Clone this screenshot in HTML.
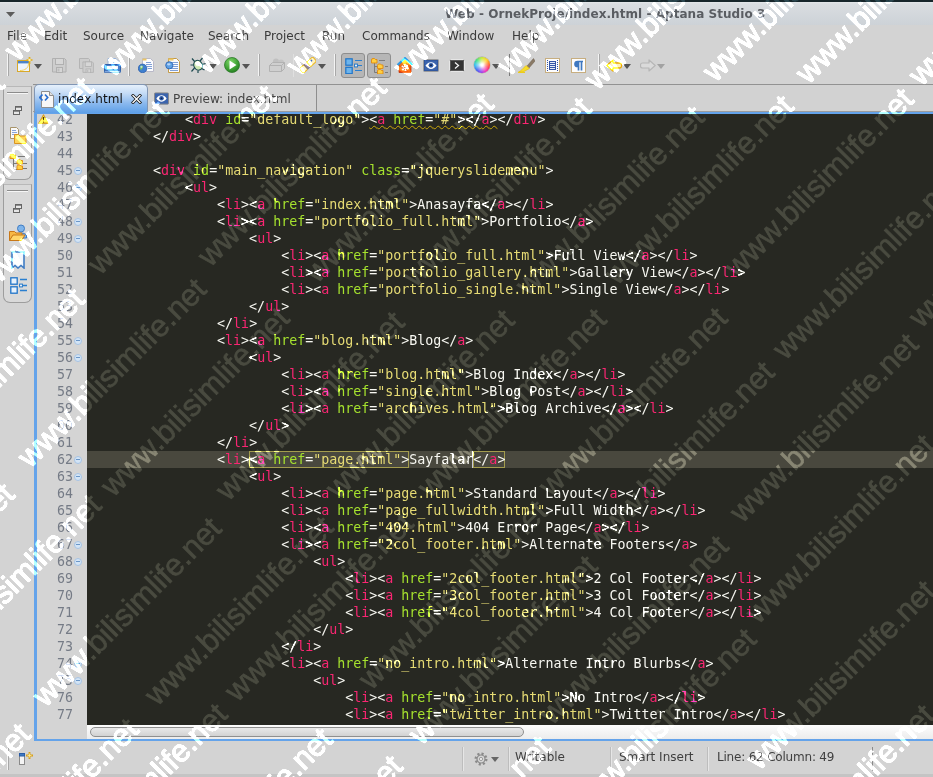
<!DOCTYPE html>
<html><head><meta charset="utf-8"><title>Web - OrnekProje/index.html - Aptana Studio 3</title>
<style>
html,body{margin:0;padding:0}
body{width:933px;height:777px;overflow:hidden;position:relative;background:#d3d3d3;font-family:"DejaVu Sans","Liberation Sans",sans-serif;font-size:12px;color:#3a3a3a}
.abs{position:absolute}
#topline{left:0;top:0;width:933px;height:2px;background:#17262b}
#title{left:0;top:2px;width:933px;height:23px;background:linear-gradient(#e4e7ea 0,#d9dde1 8%,#cdd2d7 100%)}
#title span{position:absolute;left:445px;top:5px;font-weight:bold;font-size:12px;line-height:15px;color:#5a5d62;white-space:nowrap;letter-spacing:.05px}
#menu{left:0;top:25px;width:933px;height:24px;background:#d3d3d3}
#menu span{position:absolute;top:4px;font-size:12px;line-height:15px;color:#3b3b3b;white-space:nowrap}
#tline{left:33px;top:84px;width:900px;height:1px;background:#929292}
#tabbg{left:33px;top:85px;width:900px;height:26px;background:#d2d2d2}
#tline2{left:33px;top:111px;width:900px;height:1px;background:#9c9c9c}
#tab2{left:148px;top:85px;width:168px;height:26px;background:#d4d4d4;border-right:1px solid #8e8e8e}
#tab2 span{position:absolute;left:25px;top:7px;font-size:12px;line-height:15px;color:#444;white-space:nowrap}
#tab1{left:34px;top:84px;width:114px;height:29px;border:1px solid #8196b4;border-bottom:0;border-radius:5px 5px 0 0;box-sizing:border-box;background:linear-gradient(#e6f0fb 0,#c4dbf6 30%,#8bb9ee 65%,#5d9fe8 100%)}
#tab1 span{position:absolute;left:23px;top:7px;font-size:12px;line-height:15px;color:#111;white-space:nowrap;letter-spacing:.1px}
.side{left:3px;width:27px;border:1px solid #9d9d9d;border-top-color:#b8b8b8;border-radius:0 0 7px 7px;background:#d9d9d9}
.side hr{position:absolute;left:3px;top:5px;width:21px;height:1px;margin:0;border:0;background:#8c8c8c;box-shadow:0 1px 0 #f6f6f6}
#edframe{left:34px;top:112px;width:899px;height:629px;background:#64a3ea}
#gutter{left:37px;top:114px;width:50px;height:625px;background:#d4d4d4;overflow:hidden}
#gutter>div{margin-top:-3px}
#gutter div div{height:17px;line-height:17px;font-family:"DejaVu Sans Mono","Liberation Mono",monospace;font-size:13.3px;color:#757b86;padding-left:20px;position:relative;white-space:pre}
#gutter u{position:absolute;left:37px;top:5px;width:8px;height:8px;border-radius:50%;background:#d3e4f5;border:1px solid #a6c3e4;box-sizing:border-box}
#gutter u:after{content:"";position:absolute;left:1px;top:2px;width:4px;height:1px;background:#6a96c8}
#code{left:87px;top:114px;width:846px;height:611px;background:#272822;overflow:hidden}
#code>div{margin-top:-3px}
#code div div{height:17px;line-height:17px;font-family:"DejaVu Sans Mono","Liberation Mono",monospace;font-size:13.3px;color:#f8f8f2;padding-left:2px;white-space:pre}
#code div div.cur{background:#49483e}
#code b{font-weight:normal;color:#f92672}
#code i{font-style:normal;color:#a6e22e}
#code s{text-decoration:none;color:#e6db74}
#code em{font-style:normal;display:inline-block;height:17px;box-shadow:inset 0 0 0 1px #a39c4e}#code em.c{border-left:1px solid #c8c8d8;margin-left:-1px}#code em.w{display:inline;height:auto;box-shadow:none;text-decoration:underline wavy #c9a60a .8px;text-underline-offset:1px}
#hscroll{left:87px;top:725px;width:846px;height:14px;background:linear-gradient(#fdfdfd,#ececec)}
#hthumb{left:90px;top:727px;width:432px;height:8px;border:1px solid #8f8f8f;border-radius:6px;background:linear-gradient(#e9e9e9,#d2d2d2)}
#status{left:0;top:741px;width:933px;height:36px;background:#d3d3d3}
#status span{position:absolute;top:9px;font-size:12px;line-height:15px;color:#3f3f3f;white-space:nowrap}
#status i{position:absolute;top:6px;width:1px;height:24px;background:#bdbdbd;border-right:1px solid #e6e6e6}
#botline{left:0;top:774px;width:933px;height:3px;background:#c4c4c4}
</style></head><body>
<div class="abs" id="title"><svg class="abs" style="left:6px;top:10px" width="9" height="5" viewBox="0 0 9 5"><path d="M0 0h9L4.500 5z" fill="#5c5c5c"/></svg><span>Web - OrnekProje/index.html - Aptana Studio 3</span></div>
<div class="abs" id="topline"></div>
<div class="abs" id="menu">
<span style="left:7px">File</span><span style="left:44px">Edit</span><span style="left:83px">Source</span><span style="left:140px">Navigate</span><span style="left:208px">Search</span><span style="left:264px">Project</span><span style="left:322px">Run</span><span style="left:362px">Commands</span><span style="left:447px">Window</span><span style="left:512px">Help</span>
</div>
<div class="abs" style="left:7px;top:54px;width:1px;height:22px;background:#f4f4f4;border-right:1px solid #a8a8a8"></div>
<div class="abs" style="left:128px;top:54px;width:1px;height:22px;background:#f4f4f4;border-right:1px solid #a8a8a8"></div>
<div class="abs" style="left:258px;top:54px;width:1px;height:22px;background:#f4f4f4;border-right:1px solid #a8a8a8"></div>
<div class="abs" style="left:334px;top:54px;width:1px;height:22px;background:#f4f4f4;border-right:1px solid #a8a8a8"></div>
<div class="abs" style="left:598px;top:54px;width:1px;height:22px;background:#f4f4f4;border-right:1px solid #a8a8a8"></div>
<div class="abs" style="left:509px;top:54px;width:1px;height:22px;background:#7a7a7a"></div>
<div class="abs" style="left:293px;top:54px;width:1px;height:23px;background:#e0e0e0"></div>
<svg class="abs" style="left:17px;top:57px" width="16" height="16" viewBox="0 0 16 16"><rect x=".5" y="3.5" width="12" height="11" fill="#eef5fd" stroke="#d9a92a"/><rect x="1" y="4" width="11" height="2.4" fill="#4d84c8"/><path d="M3 13.5c5 0 8.5-2.5 8.5-7" stroke="#f2d060" fill="none"/><path d="M12.5 0v7M9.5 3h6" stroke="#e2ad16" stroke-width="1.7"/><circle cx="12.5" cy="3" r="1.2" fill="#fff3b0"/></svg>
<svg class="abs" style="left:34px;top:64px" width="8" height="5" viewBox="0 0 8 5"><path d="M0 0h8l-4 5z" fill="#555"/></svg>
<svg class="abs" style="left:52px;top:58px" width="15" height="15" viewBox="0 0 15 15"><path d="M.5 .5h12l1.5 1.5v12H.5z" fill="#cdcdcd" stroke="#b0b0b0"/><rect x="3.5" y=".5" width="8" height="6" fill="#d6d6d6" stroke="#b0b0b0"/><rect x="4.5" y="9.500" width="6" height="5" fill="#d6d6d6" stroke="#b0b0b0"/><rect x="5.5" y="10.5" width="2" height="3" fill="#bdbdbd"/></svg>
<svg class="abs" style="left:79px;top:58px" width="15" height="15" viewBox="0 0 15 15"><path d="M.5 .5h9l1 1v9H.5z" fill="#cdcdcd" stroke="#b4b4b4"/><g transform="translate(3.5,3.5) scale(.78)"><path d="M.5 .5h12l1.5 1.5v12H.5z" fill="#cdcdcd" stroke="#b0b0b0"/><rect x="3.5" y=".5" width="8" height="6" fill="#d6d6d6" stroke="#b0b0b0"/><rect x="4.5" y="9.500" width="6" height="5" fill="#d6d6d6" stroke="#b0b0b0"/><rect x="5.5" y="10.5" width="2" height="3" fill="#bdbdbd"/></g></svg>
<svg class="abs" style="left:104px;top:58px" width="17" height="15" viewBox="0 0 17 15"><path d="M4 .5h8l2 2v4H4z" fill="#fff" stroke="#9db4d6"/><path d="M6 2.500h5M6 4.500h6" stroke="#9bb3d8"/><path d="M1.500 6.500h14a1 1 0 011 1v6h-16v-6a1 1 0 011-1z" fill="#4a80cc" stroke="#2e5fa8"/><rect x="3" y="8" width="11" height="3" fill="#eef4fb"/><rect x=".5" y="12.500" width="16" height="2" fill="#7ea6de" stroke="#2e5fa8" stroke-width=".6"/></svg>
<svg class="abs" style="left:138px;top:58px" width="16" height="15" viewBox="0 0 16 15"><path d="M4.500 .5h8l3 3v10h-11z" fill="#fbfbfd" stroke="#b9b9c8"/><path d="M4.500 .5h4v2h-4z" fill="#ecc766"/><path d="M8 4.500h5M8 6.500h6M9 8.500h5M10 10.500h4" stroke="#7f9fd6"/><circle cx="4.600" cy="10.400" r="4.300" fill="#3f7fd0" stroke="#2a5ca6" stroke-width=".7"/><path d="M2.500 8c1.500-1 3 0 2.500 1.500s-2 1-1.500 3c-1.500-1-2-3-1-4.500z" fill="#7fc45a"/><circle cx="3.400" cy="8.800" r="1.100" fill="#cfe6ff" opacity=".8"/></svg>
<svg class="abs" style="left:165px;top:58px" width="16" height="15" viewBox="0 0 16 15"><path d="M3.500 .5h8l3 3v11h-11z" fill="#fbfbfd" stroke="#c39b48"/><path d="M3.500 .5h5v2h-5z" fill="#ecc766"/><path d="M7 4.500h6M8 6.500h5M8 8.500h5M5 10.500h8M5 12.500h8" stroke="#7f9fd6"/><circle cx="4.300" cy="7.300" r="3.600" fill="#5fa0e4" stroke="#2f68b4" stroke-width=".9"/><ellipse cx="3.800" cy="6.300" rx="1.800" ry="1.100" fill="#cfe6ff" opacity=".8"/></svg>
<svg class="abs" style="left:190px;top:57px" width="16" height="16" viewBox="0 0 16 16"><g stroke="#1e4a50" stroke-width="1.200" fill="none"><path d="M5 5L2 1.500M10 4L12.500 1M4 8H.5M12 7.500l3.500-1M4.500 11L1.500 14.500M11.500 11.500l3 1.500M8 13.500v2.500"/></g><ellipse cx="8" cy="8.300" rx="4.200" ry="5" transform="rotate(-25 8 8.300)" fill="#cfe9b4" stroke="#1e4a50" stroke-width="1.100"/><ellipse cx="7" cy="7" rx="1.800" ry="2.400" transform="rotate(-25 7 7)" fill="#f3fbe6"/></svg>
<svg class="abs" style="left:209px;top:64px" width="8" height="5" viewBox="0 0 8 5"><path d="M0 0h8l-4 5z" fill="#555"/></svg>
<svg class="abs" style="left:224px;top:57px" width="16" height="16" viewBox="0 0 16 16"><defs><radialGradient id="rg" cx=".4" cy=".3" r=".8"><stop offset="0" stop-color="#7fd66a"/><stop offset=".6" stop-color="#3da032"/><stop offset="1" stop-color="#1f7420"/></radialGradient></defs><circle cx="8" cy="8" r="7.500" fill="url(#rg)" stroke="#2c7a28" stroke-width=".8"/><path d="M5.500 3.500L12.500 8l-7 4.500z" fill="#fff"/></svg>
<svg class="abs" style="left:242px;top:64px" width="8" height="5" viewBox="0 0 8 5"><path d="M0 0h8l-4 5z" fill="#555"/></svg>
<svg class="abs" style="left:269px;top:58px" width="17" height="14" viewBox="0 0 17 14"><circle cx="7" cy="3.500" r="3" fill="#c0c0c0"/><circle cx="12" cy="4.500" r="3" fill="#c4c4c4"/><path d="M.5 7.500l3-3h12v6l-3 3H.5z" fill="#cfcfcf" stroke="#b2b2b2"/><path d="M.5 7.500h12l3-3M12.500 7.500v6" stroke="#b2b2b2" fill="none"/></svg>
<svg class="abs" style="left:300px;top:57px" width="16" height="16" viewBox="0 0 16 16"><g transform="rotate(-42 8 8)"><rect x="-1" y="5" width="6" height="6" rx="1" fill="#fff7cf" stroke="#e9b41e"/><rect x="5" y="5" width="4" height="6" fill="#8d8494" stroke="#6e6678" stroke-width=".6"/><path d="M9 5h6.500a1.500 1.500 0 011.500 1.500v3a1.500 1.500 0 01-1.500 1.500H9z" fill="#fff3c2" stroke="#e9b41e"/><circle cx="13.500" cy="7" r=".9" fill="#3a6ad0"/></g></svg>
<svg class="abs" style="left:318px;top:64px" width="8" height="5" viewBox="0 0 8 5"><path d="M0 0h8l-4 5z" fill="#555"/></svg>
<div class="abs" style="left:341px;top:53px;width:22px;height:23px;background:#b6b6b6;border:1px solid #8e8e8e;border-radius:3px"></div>
<div class="abs" style="left:367px;top:53px;width:22px;height:23px;background:#b6b6b6;border:1px solid #8e8e8e;border-radius:3px"></div>
<svg class="abs" style="left:345px;top:58px" width="17" height="16" viewBox="0 0 17 16"><rect x=".8" y=".8" width="6.400" height="6.400" fill="#6db4ec" stroke="#1f74c8" stroke-width="1.200"/><rect x=".8" y="9.300" width="6.400" height="6.400" fill="#6db4ec" stroke="#1f74c8" stroke-width="1.200"/><path d="M10 2.500h7M13 7.500h4M10 12.500h7" stroke="#2a7fd0" stroke-width="1.200"/><rect x="9.600" y="6.100" width="2.800" height="2.800" fill="#fff" stroke="#1f74c8"/></svg>
<svg class="abs" style="left:371px;top:58px" width="17" height="16" viewBox="0 0 17 16"><path d="M3.500 5v9.500h4M3.500 8.500h4" stroke="#7c7c7c" fill="none"/><path d="M8 2.500h6M14 8.500h3M14 14.500h3" stroke="#7c7c7c"/><g transform="translate(.5,.5)"><path d="M0 1.500a1.500 1.500 0 011.500-1.500h1.500l1 1h1.500v3.500h-5.500z" fill="#ffcf3f" stroke="#e08a10" stroke-width=".9"/></g><g transform="translate(6.500,6)"><path d="M0 1.500a1.500 1.500 0 011.500-1.500h1.500l1 1h1.500v3.500h-5.500z" fill="#ffcf3f" stroke="#e08a10" stroke-width=".9"/></g><g transform="translate(6.500,11.500)"><path d="M0 1.500a1.500 1.500 0 011.500-1.500h1.500l1 1h1.500v3.500h-5.500z" fill="#ffcf3f" stroke="#e08a10" stroke-width=".9"/></g></svg>
<svg class="abs" style="left:397px;top:57px" width="16" height="16" viewBox="0 0 16 16"><defs><linearGradient id="hg" x1="0" y1="0" x2="0" y2="1"><stop offset="0" stop-color="#f6a22a"/><stop offset="1" stop-color="#dc3208"/></linearGradient></defs><path d="M2 7.500L8 2l6 5.500V15.500H2z" fill="url(#hg)" stroke="#c03a0a" stroke-width=".8"/><path d="M.5 8L8 1l7.500 7" stroke="#2f9ae6" stroke-width="2" fill="none" stroke-linejoin="round"/><circle cx="8" cy="10.500" r="2.600" fill="none" stroke="#fff" stroke-width="2" stroke-dasharray="1.500 1.200"/><circle cx="8" cy="10.500" r="1.700" fill="#fff"/><circle cx="8" cy="10.500" r=".8" fill="#e8541a"/></svg>
<svg class="abs" style="left:423px;top:59px" width="16" height="13" viewBox="0 0 16 13"><rect x=".5" y=".5" width="15" height="12" rx="1" fill="#3b64ad" stroke="#9a9a9a"/><rect x="1.500" y="1.500" width="13" height="10" fill="none" stroke="#2b4f94" stroke-width=".6"/><path d="M2.500 6.500c3-4.500 8-4.500 11 0c-3 4.500-8 4.500-11 0z" fill="#fff"/><circle cx="8" cy="6.300" r="2.400" fill="#2f5ba8"/><circle cx="8" cy="6.300" r="1" fill="#0e2450"/></svg>
<svg class="abs" style="left:449px;top:59px" width="16" height="13" viewBox="0 0 16 13"><rect x=".5" y=".5" width="15" height="12" rx="1" fill="#3a3a3a" stroke="#e6e6e6"/><rect x="1.500" y="1.500" width="13" height="10" fill="#333" stroke="#595959"/><path d="M6 3.500L9.500 6.500L6 9.500" stroke="#f2f2f2" stroke-width="1.300" fill="none"/></svg>
<div class="abs" style="left:474px;top:57px;width:16px;height:16px;border-radius:50%;background:radial-gradient(circle,#fff 0,#fff 10%,rgba(255,255,255,.5) 34%,rgba(255,255,255,0) 66%),conic-gradient(#c8e830,#ffd020 12%,#ff7020 22%,#ff3050 30%,#f030c0 42%,#9040f0 52%,#4060f0 62%,#30c0f0 75%,#40e080 87%,#c8e830);box-shadow:0 0 0 .5px rgba(120,120,120,.5)"></div>
<svg class="abs" style="left:492px;top:64px" width="8" height="5" viewBox="0 0 8 5"><path d="M0 0h8l-4 5z" fill="#555"/></svg>
<svg class="abs" style="left:518px;top:58px" width="17" height="15" viewBox="0 0 17 15"><path d="M9 8L15.500 .5L17 3L11 10z" fill="#8a7a66" stroke="#6a5c4c" stroke-width=".5"/><path d="M8 7.500l3.500 3L5 14H.5c2.500-1 4-3 7.500-6.500z" fill="#f6dc2a" stroke="#e2b80c" stroke-width=".6"/><path d="M0 14.500h7" stroke="#eccc1a"/></svg>
<svg class="abs" style="left:545px;top:58px" width="15" height="15" viewBox="0 0 15 15"><rect x=".5" y=".5" width="14" height="14" fill="#fdfdfd" stroke="#c7ae80"/><rect x="4.500" y="3.500" width="6" height="8" fill="#e4ecf8" stroke="#3555a6"/><path d="M5 5.500h5M5 7.500h5M5 9.500h5" stroke="#3555a6"/><path d="M2.500 2v11M12.500 2v11" stroke="#3555a6" stroke-dasharray="1 1"/></svg>
<svg class="abs" style="left:571px;top:58px" width="15" height="15" viewBox="0 0 15 15"><rect x=".5" y=".5" width="14" height="14" fill="#fdfdfd" stroke="#c7ae80"/><path d="M7.500 12.500V3.500M10.500 12.500V3.500M12 3.500H6.500a2.500 2.500 0 000 5h1" stroke="#3f78c0" stroke-width="1.700" fill="none"/><path d="M4 6a2.500 2.500 0 012.500-2.500h1v5h-1A2.500 2.500 0 014 6z" fill="#3f78c0"/></svg>
<svg class="abs" style="left:606px;top:59px" width="16" height="13" viewBox="0 0 16 13"><path d="M.8 6.500L7 1v3h6.500a2 2 0 012 2v1a2 2 0 01-2 2H7v3z" fill="#fff2b8" stroke="#eaa708" stroke-width="1.300" stroke-linejoin="round"/></svg>
<svg class="abs" style="left:623px;top:64px" width="8" height="5" viewBox="0 0 8 5"><path d="M0 0h8l-4 5z" fill="#555"/></svg>
<svg class="abs" style="left:640px;top:59px" width="16" height="13" viewBox="0 0 16 13"><path d="M15.200 6.500L9 1v3H2.500a2 2 0 00-2 2v1a2 2 0 002 2H9v3z" fill="#dadada" stroke="#b6b6b6" stroke-width="1.200" stroke-linejoin="round"/></svg>
<svg class="abs" style="left:657px;top:64px" width="8" height="5" viewBox="0 0 8 5"><path d="M0 0h8l-4 5z" fill="#a2a2a2"/></svg>
<div class="abs" id="tline"></div>
<div class="abs" id="tabbg"></div>
<div class="abs" id="tline2"></div>
<div class="abs" id="tab2"><svg class="abs" style="left:6px;top:7px" width="15" height="13" viewBox="0 0 16 13"><rect x=".5" y=".5" width="15" height="12" rx="1" fill="#3b64ad" stroke="#8a8a8a"/><path d="M2.500 6.500c3-4.500 8-4.500 11 0c-3 4.500-8 4.500-11 0z" fill="#fff"/><circle cx="8" cy="6.300" r="2.400" fill="#2f5ba8"/><circle cx="8" cy="6.300" r="1" fill="#0e2450"/></svg><span>Preview: index.html</span></div>
<div class="abs" id="edframe"></div>
<div class="abs" id="tab1"><svg class="abs" style="left:4px;top:6px" width="15" height="17" viewBox="0 0 15 17"><path d="M2.500 .5h8l4 4v12h-12z" fill="#f7f7f7" stroke="#8e8e8e"/><path d="M10.500 .5v4h4" fill="#e0e0e0" stroke="#8e8e8e"/><path d="M3.500 3.500L.8 6.500l2.700 3M6 3.500l2.700 3L6 9.500" stroke="#2a6fd0" stroke-width="1.700" fill="none"/></svg><span>index.html</span><svg class="abs" style="left:96px;top:9px" width="11" height="10" viewBox="0 0 11 10"><path d="M2 1.500l7 7M9 1.500l-7 7" stroke="#1a1a1a" stroke-width="3" stroke-linecap="square"/><path d="M2 1.500l7 7M9 1.500l-7 7" stroke="#fff" stroke-width="1.300" stroke-linecap="square"/></svg></div>
<div class="abs side" style="top:86px;height:92px"><hr>
<svg class="abs" style="left:9px;top:19px" width="9" height="9" viewBox="0 0 9 9"><rect x="2.500" y=".5" width="6" height="4" fill="#e6e6e6" stroke="#666"/><rect x="2.500" y=".5" width="6" height="1.200" fill="#666"/><rect x=".5" y="4.500" width="6" height="4" fill="#e6e6e6" stroke="#666"/><rect x=".5" y="4.500" width="6" height="1.200" fill="#666"/></svg>
<svg class="abs" style="left:5px;top:40px" width="18" height="17" viewBox="0 0 18 17"><path d="M1.500 .5h6l2 2v9h-8z" fill="#fafafa" stroke="#a8946a"/><path d="M3 3.500h4M3 5.500h5M3 7.500h3" stroke="#88a4d8"/><path d="M5.500 7.500h4l1.500 1.500h6v7.500h-11.500z" fill="#ffd45a" stroke="#d89420"/></svg>
<svg class="abs" style="left:5px;top:66px" width="18" height="18" viewBox="0 0 18 18"><path d="M4.500 5v11.500h5M4.500 10.500h5" stroke="#777" fill="none"/><path d="M9 3.500h7M14 10.500h4M14 15.500h4" stroke="#777"/><g fill="#ffcf3f" stroke="#e08a10" stroke-width=".9"><path d="M1 2.500a1.500 1.500 0 011.500-1.500h1.500l1 1h1.500v3.500h-5.500z"/><path d="M8 8a1.500 1.500 0 011.500-1.500h1.500l1 1h1.500V11h-5.500z"/><path d="M8 13.500a1.500 1.500 0 011.500-1.500h1.500l1 1h1.500v3.500h-5.500z"/></g></svg>
</div>
<div class="abs side" style="top:184px;height:117px"><hr>
<svg class="abs" style="left:9px;top:19px" width="9" height="9" viewBox="0 0 9 9"><rect x="2.500" y=".5" width="6" height="4" fill="#e6e6e6" stroke="#666"/><rect x="2.500" y=".5" width="6" height="1.200" fill="#666"/><rect x=".5" y="4.500" width="6" height="4" fill="#e6e6e6" stroke="#666"/><rect x=".5" y="4.500" width="6" height="1.200" fill="#666"/></svg>
<svg class="abs" style="left:5px;top:39px" width="18" height="18" viewBox="0 0 18 18"><circle cx="12" cy="4.500" r="3.500" fill="#7fb4ea" stroke="#3f7cc4"/><path d="M6.500 12c0-4 11-4 11 0v2h-11z" fill="#7fb4ea" stroke="#3f7cc4"/><path d="M.5 7.500h5l1.500 1.500h6v2.500h-9l-3.500 5z" fill="#f7b844" stroke="#c87818"/><path d="M.5 16.500l3.500-5.500h12l-3.500 5.500z" fill="#ffd66a" stroke="#c87818"/></svg>
<svg class="abs" style="left:7px;top:66px" width="14" height="18" viewBox="0 0 14 18"><path d="M1 1h12v16l-3-2.500-3 2.500-3-2.500-3 2.500z" fill="#f2f7fd" stroke="#3f7cc4" stroke-width="1.600"/></svg>
<svg class="abs" style="left:6px;top:92px" width="17" height="17" viewBox="0 0 17 17"><rect x=".8" y=".8" width="6.400" height="6.400" fill="#e6f1fc" stroke="#1f74c8" stroke-width="1.300"/><rect x=".8" y="9.800" width="6.400" height="6.400" fill="#e6f1fc" stroke="#1f74c8" stroke-width="1.300"/><path d="M10 2.500h7M13 8.500h4M10 13.500h7" stroke="#2a7fd0" stroke-width="1.300"/><rect x="9.600" y="7.100" width="2.800" height="2.800" fill="#fff" stroke="#1f74c8"/></svg>
</div>
<div class="abs" id="gutter"><div>
<div>42</div>
<div>43</div>
<div>44</div>
<div>45<u></u></div>
<div>46<u></u></div>
<div>47</div>
<div>48<u></u></div>
<div>49<u></u></div>
<div>50</div>
<div>51</div>
<div>52</div>
<div>53</div>
<div>54</div>
<div>55<u></u></div>
<div>56<u></u></div>
<div>57</div>
<div>58</div>
<div>59</div>
<div>60</div>
<div>61</div>
<div>62<u></u></div>
<div>63<u></u></div>
<div>64</div>
<div>65</div>
<div>66</div>
<div>67<u></u></div>
<div>68<u></u></div>
<div>69</div>
<div>70</div>
<div>71</div>
<div>72</div>
<div>73</div>
<div>74<u></u></div>
<div>75<u></u></div>
<div>76</div>
<div>77</div>
</div><svg class="abs" style="left:1px;top:0px" width="11" height="10" viewBox="0 0 14 13"><path d="M7 .8L13.300 12.200H.7z" fill="#f8d03a" stroke="#c98a10" stroke-linejoin="round"/><path d="M7 4v4.500" stroke="#3a2a08" stroke-width="1.600"/><circle cx="7" cy="10.300" r=".9" fill="#3a2a08"/></svg></div>
<div class="abs" id="code"><div>
<div>            &lt;<b>div</b> <i>id</i>=<s>"default_logo"</s>&gt;<em class="w">&lt;<b>a</b> <i>href</i>=<s>"#"</s>&gt;&lt;/<b>a</b>&gt;</em>&lt;/<b>div</b>&gt;</div>
<div>        &lt;/<b>div</b>&gt;</div>
<div></div>
<div>        &lt;<b>div</b> <i>id</i>=<s>"main_navigation"</s> <i>class</i>=<s>"jqueryslidemenu"</s>&gt;</div>
<div>            &lt;<b>ul</b>&gt;</div>
<div>                &lt;<b>li</b>&gt;&lt;<b>a</b> <i>href</i>=<s>"index.html"</s>&gt;Anasayfa&lt;/<b>a</b>&gt;&lt;/<b>li</b>&gt;</div>
<div>                &lt;<b>li</b>&gt;&lt;<b>a</b> <i>href</i>=<s>"portfolio_full.html"</s>&gt;Portfolio&lt;/<b>a</b>&gt;</div>
<div>                    &lt;<b>ul</b>&gt;</div>
<div>                        &lt;<b>li</b>&gt;&lt;<b>a</b> <i>href</i>=<s>"portfolio_full.html"</s>&gt;Full View&lt;/<b>a</b>&gt;&lt;/<b>li</b>&gt;</div>
<div>                        &lt;<b>li</b>&gt;&lt;<b>a</b> <i>href</i>=<s>"portfolio_gallery.html"</s>&gt;Gallery View&lt;/<b>a</b>&gt;&lt;/<b>li</b>&gt;</div>
<div>                        &lt;<b>li</b>&gt;&lt;<b>a</b> <i>href</i>=<s>"portfolio_single.html"</s>&gt;Single View&lt;/<b>a</b>&gt;&lt;/<b>li</b>&gt;</div>
<div>                    &lt;/<b>ul</b>&gt;</div>
<div>                &lt;/<b>li</b>&gt;</div>
<div>                &lt;<b>li</b>&gt;&lt;<b>a</b> <i>href</i>=<s>"blog.html"</s>&gt;Blog&lt;/<b>a</b>&gt;</div>
<div>                    &lt;<b>ul</b>&gt;</div>
<div>                        &lt;<b>li</b>&gt;&lt;<b>a</b> <i>href</i>=<s>"blog.html"</s>&gt;Blog Index&lt;/<b>a</b>&gt;&lt;/<b>li</b>&gt;</div>
<div>                        &lt;<b>li</b>&gt;&lt;<b>a</b> <i>href</i>=<s>"single.html"</s>&gt;Blog Post&lt;/<b>a</b>&gt;&lt;/<b>li</b>&gt;</div>
<div>                        &lt;<b>li</b>&gt;&lt;<b>a</b> <i>href</i>=<s>"archives.html"</s>&gt;Blog Archive&lt;/<b>a</b>&gt;&lt;/<b>li</b>&gt;</div>
<div>                    &lt;/<b>ul</b>&gt;</div>
<div>                &lt;/<b>li</b>&gt;</div>
<div class="cur">                &lt;<b>li</b>&gt;<em>&lt;<b>a</b> <i>href</i>=<s>"page.html"</s>&gt;</em>Sayfalar<em class="c">&lt;/<b>a</b>&gt;</em></div>
<div>                    &lt;<b>ul</b>&gt;</div>
<div>                        &lt;<b>li</b>&gt;&lt;<b>a</b> <i>href</i>=<s>"page.html"</s>&gt;Standard Layout&lt;/<b>a</b>&gt;&lt;/<b>li</b>&gt;</div>
<div>                        &lt;<b>li</b>&gt;&lt;<b>a</b> <i>href</i>=<s>"page_fullwidth.html"</s>&gt;Full Width&lt;/<b>a</b>&gt;&lt;/<b>li</b>&gt;</div>
<div>                        &lt;<b>li</b>&gt;&lt;<b>a</b> <i>href</i>=<s>"404.html"</s>&gt;404 Error Page&lt;/<b>a</b>&gt;&lt;/<b>li</b>&gt;</div>
<div>                        &lt;<b>li</b>&gt;&lt;<b>a</b> <i>href</i>=<s>"2col_footer.html"</s>&gt;Alternate Footers&lt;/<b>a</b>&gt;</div>
<div>                            &lt;<b>ul</b>&gt;</div>
<div>                                &lt;<b>li</b>&gt;&lt;<b>a</b> <i>href</i>=<s>"2col_footer.html"</s>&gt;2 Col Footer&lt;/<b>a</b>&gt;&lt;/<b>li</b>&gt;</div>
<div>                                &lt;<b>li</b>&gt;&lt;<b>a</b> <i>href</i>=<s>"3col_footer.html"</s>&gt;3 Col Footer&lt;/<b>a</b>&gt;&lt;/<b>li</b>&gt;</div>
<div>                                &lt;<b>li</b>&gt;&lt;<b>a</b> <i>href</i>=<s>"4col_footer.html"</s>&gt;4 Col Footer&lt;/<b>a</b>&gt;&lt;/<b>li</b>&gt;</div>
<div>                            &lt;/<b>ul</b>&gt;</div>
<div>                        &lt;/<b>li</b>&gt;</div>
<div>                        &lt;<b>li</b>&gt;&lt;<b>a</b> <i>href</i>=<s>"no_intro.html"</s>&gt;Alternate Intro Blurbs&lt;/<b>a</b>&gt;</div>
<div>                            &lt;<b>ul</b>&gt;</div>
<div>                                &lt;<b>li</b>&gt;&lt;<b>a</b> <i>href</i>=<s>"no_intro.html"</s>&gt;No Intro&lt;/<b>a</b>&gt;&lt;/<b>li</b>&gt;</div>
<div>                                &lt;<b>li</b>&gt;&lt;<b>a</b> <i>href</i>=<s>"twitter_intro.html"</s>&gt;Twitter Intro&lt;/<b>a</b>&gt;&lt;/<b>li</b>&gt;</div>
</div></div>
<div class="abs" id="hscroll"></div>
<div class="abs" id="hthumb"></div>
<div class="abs" id="status">
<div class="abs" style="left:7px;top:7px;width:1px;height:22px;background:#f4f4f4;border-right:1px solid #a8a8a8"></div>
<svg class="abs" style="left:19px;top:10px" width="15" height="15" viewBox="0 0 15 15"><rect x=".5" y="2.500" width="5" height="11" fill="#f4f4f4" stroke="#8a8a8a"/><rect x=".5" y="2.500" width="5" height="2.500" fill="#3f7cc4" stroke="#2a5ca6"/><path d="M10.500 1v7M7 4.500h7" stroke="#d8a018" stroke-width="1.800"/><path d="M10.500 2.500v4M8.500 4.500h4" stroke="#fff0a0" stroke-width=".8"/></svg>
<i style="left:462px"></i><i style="left:508px"></i><i style="left:610px"></i><i style="left:707px"></i><i style="left:872px;background:#8a8a8a;border:0"></i>
<svg class="abs" style="left:473px;top:10px" width="16" height="16" viewBox="0 0 16 16"><circle cx="8" cy="8" r="5" fill="none" stroke="#8a8a8a" stroke-width="3" stroke-dasharray="2 1.900"/><circle cx="8" cy="8" r="4" fill="#d6d6d6" stroke="#8a8a8a" stroke-width="1.200"/><circle cx="8" cy="8" r="1.600" fill="#efefef" stroke="#8a8a8a" stroke-width=".8"/></svg>
<svg class="abs" style="left:491px;top:16px" width="8" height="5" viewBox="0 0 8 5"><path d="M0 0h8l-4 5z" fill="#666"/></svg>
<span style="left:515px">Writable</span><span style="left:619px">Smart Insert</span><span style="left:717px;letter-spacing:-.2px">Line: 62 Column: 49</span>
</div>
<div class="abs" id="botline"></div>
<svg id="wm" width="933" height="777" viewBox="0 0 933 777" style="position:absolute;left:0;top:0;mix-blend-mode:color-dodge;pointer-events:none"><g font-family="Liberation Sans, Arial, sans-serif" font-size="31" fill="#767676" stroke="#767676" stroke-width="0.8">
<rect x="-300" y="-300" width="1600" height="1400" fill="#000" stroke="none"/>
<text transform="translate(66.5,10) rotate(-45)" x="-71.5" y="2">www.bilisimlife.net</text>
<text transform="translate(162.5,26) rotate(-45)" x="-71.5" y="2">www.bilisimlife.net</text>
<text transform="translate(256.5,23) rotate(-45)" x="-71.5" y="2">www.bilisimlife.net</text>
<text transform="translate(348.5,25) rotate(-45)" x="-71.5" y="2">www.bilisimlife.net</text>
<text transform="translate(455.5,27) rotate(-45)" x="-71.5" y="2">www.bilisimlife.net</text>
<text transform="translate(558.5,25) rotate(-45)" x="-71.5" y="2">www.bilisimlife.net</text>
<text transform="translate(646.5,39) rotate(-45)" x="-71.5" y="2">www.bilisimlife.net</text>
<text transform="translate(764.5,31) rotate(-45)" x="-71.5" y="2">www.bilisimlife.net</text>
<text transform="translate(857.5,33) rotate(-45)" x="-71.5" y="2">www.bilisimlife.net</text>
<text transform="translate(970.5,35) rotate(-45)" x="-71.5" y="2">www.bilisimlife.net</text>
<text transform="translate(-122.5,212) rotate(-45)" x="-71.5" y="2">www.bilisimlife.net</text>
<text transform="translate(-33.5,216) rotate(-45)" x="-71.5" y="2">www.bilisimlife.net</text>
<text transform="translate(41.5,239) rotate(-45)" x="-71.5" y="2">www.bilisimlife.net</text>
<text transform="translate(149.5,224) rotate(-45)" x="-71.5" y="2">www.bilisimlife.net</text>
<text transform="translate(259.5,216) rotate(-45)" x="-71.5" y="2">www.bilisimlife.net</text>
<text transform="translate(366.5,232) rotate(-45)" x="-71.5" y="2">www.bilisimlife.net</text>
<text transform="translate(464.5,236) rotate(-45)" x="-71.5" y="2">www.bilisimlife.net</text>
<text transform="translate(577.5,245) rotate(-45)" x="-71.5" y="2">www.bilisimlife.net</text>
<text transform="translate(666.5,234) rotate(-45)" x="-71.5" y="2">www.bilisimlife.net</text>
<text transform="translate(786.5,227) rotate(-45)" x="-71.5" y="2">www.bilisimlife.net</text>
<text transform="translate(834.5,309) rotate(-45)" x="-71.5" y="2">www.bilisimlife.net</text>
<text transform="translate(970.5,277) rotate(-45)" x="-71.5" y="2">www.bilisimlife.net</text>
<text transform="translate(-42.5,427) rotate(-45)" x="-71.5" y="2">www.bilisimlife.net</text>
<text transform="translate(79.5,417) rotate(-45)" x="-71.5" y="2">www.bilisimlife.net</text>
<text transform="translate(162.5,446) rotate(-45)" x="-71.5" y="2">www.bilisimlife.net</text>
<text transform="translate(277.5,450) rotate(-45)" x="-71.5" y="2">www.bilisimlife.net</text>
<text transform="translate(387.5,448) rotate(-45)" x="-71.5" y="2">www.bilisimlife.net</text>
<text transform="translate(479.5,447) rotate(-45)" x="-71.5" y="2">www.bilisimlife.net</text>
<text transform="translate(600.5,446) rotate(-45)" x="-71.5" y="2">www.bilisimlife.net</text>
<text transform="translate(647.5,500) rotate(-45)" x="-71.5" y="2">www.bilisimlife.net</text>
<text transform="translate(791.5,472) rotate(-45)" x="-71.5" y="2">www.bilisimlife.net</text>
<text transform="translate(-112.5,622) rotate(-45)" x="-71.5" y="2">www.bilisimlife.net</text>
<text transform="translate(-25.5,633) rotate(-45)" x="-71.5" y="2">www.bilisimlife.net</text>
<text transform="translate(94.5,656) rotate(-45)" x="-71.5" y="2">www.bilisimlife.net</text>
<text transform="translate(206.5,655) rotate(-45)" x="-71.5" y="2">www.bilisimlife.net</text>
<text transform="translate(286.5,651) rotate(-45)" x="-71.5" y="2">www.bilisimlife.net</text>
<text transform="translate(420.5,639) rotate(-45)" x="-71.5" y="2">www.bilisimlife.net</text>
<text transform="translate(470.5,694) rotate(-45)" x="-71.5" y="2">www.bilisimlife.net</text>
<text transform="translate(601.5,674) rotate(-45)" x="-71.5" y="2">www.bilisimlife.net</text>
<text transform="translate(807.5,573) rotate(-45)" x="-71.5" y="2">www.bilisimlife.net</text>
<text transform="translate(808.5,719) rotate(-45)" x="-71.5" y="2">www.bilisimlife.net</text>
<text transform="translate(-96.5,862) rotate(-45)" x="-71.5" y="2">www.bilisimlife.net</text>
<text transform="translate(11.5,857) rotate(-45)" x="-71.5" y="2">www.bilisimlife.net</text>
<text transform="translate(100.5,842) rotate(-45)" x="-71.5" y="2">www.bilisimlife.net</text>
<text transform="translate(205.5,867) rotate(-45)" x="-71.5" y="2">www.bilisimlife.net</text>
<text transform="translate(275.5,894) rotate(-45)" x="-71.5" y="2">www.bilisimlife.net</text>
<text transform="translate(423.5,875) rotate(-45)" x="-71.5" y="2">www.bilisimlife.net</text>
<text transform="translate(629.5,767) rotate(-45)" x="-71.5" y="2">www.bilisimlife.net</text>
<text transform="translate(807.5,843) rotate(-45)" x="-71.5" y="2">www.bilisimlife.net</text>
</g></svg>
</body></html>
